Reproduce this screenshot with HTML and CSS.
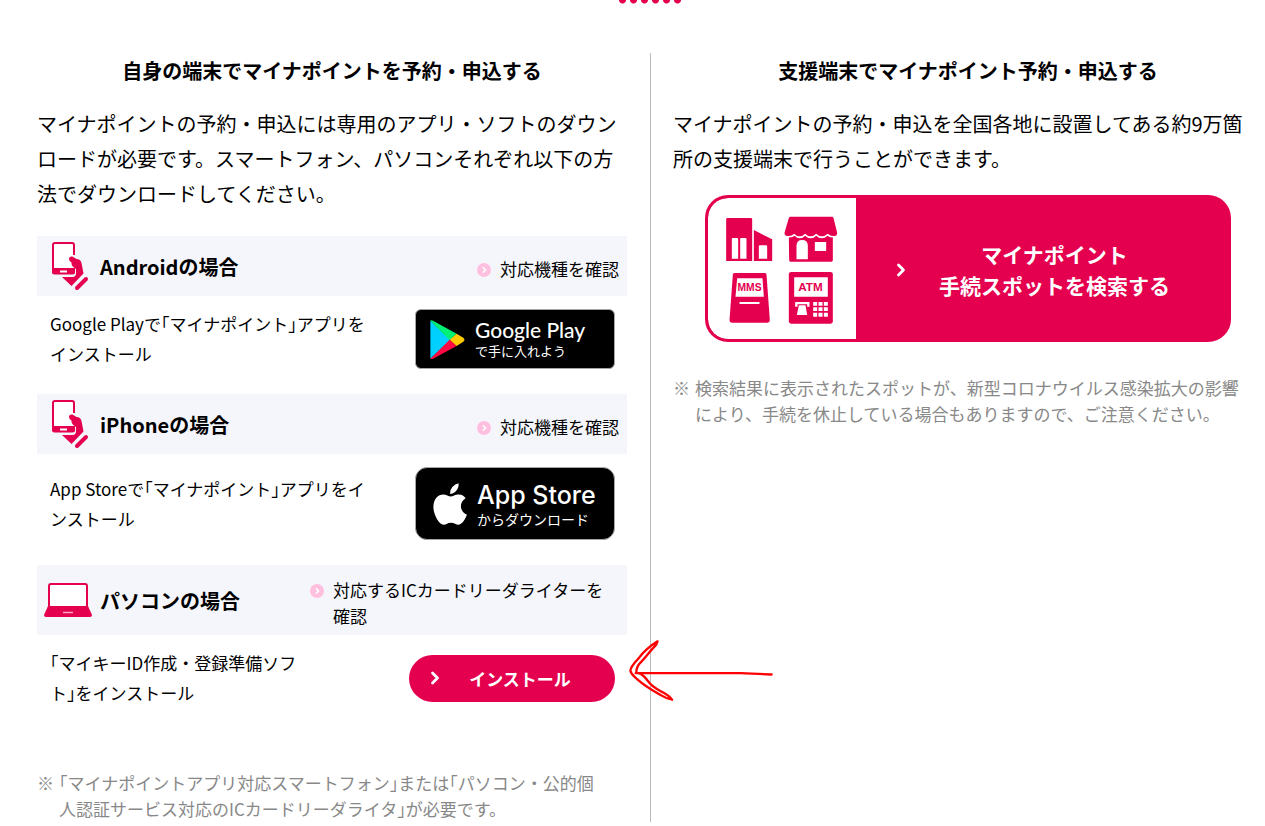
FILE: index.html
```
<!DOCTYPE html>
<html lang="ja">
<head>
    <meta charset="UTF-8">
    <meta name="viewport" content="width=device-width, initial-scale=1.0">
    <title>マイナポイントの予約・申込</title>
    <link rel="stylesheet" href="styles.css">
</head>
<body>

    <!-- Shared icons -->
    <svg class="symbols" aria-hidden="true">
        <symbol id="icon-phone" viewBox="0 0 48 52">
            <path d="M30 15V5q0-2-2-2H11q-2 0-2 2v26q0 2 2 2h17q2 0 2-2v-2" fill="#fff" stroke="#e4004f" stroke-width="2"/>
            <path d="M8 28h23v4q0 2.500-2.500 2.500h-18Q8 34.500 8 32z" fill="#e4004f"/>
            <path d="M16 31.500h7" stroke="#fff" stroke-width="2"/>
            <path d="M25 19q0-3 3.500-2.500l4 2.500q4 0 5 4l2 10.500L27.500 46 18 37h10.500q3.500 0 3.500-4v-4q-5-3-4.500-6.500Q25 21.500 25 19z" fill="#e4004f"/>
            <path d="M42 39 33 48" stroke="#e4004f" stroke-width="4" stroke-linecap="round"/>
        </symbol>
        <symbol id="icon-circle" viewBox="0 0 14 14">
            <circle cx="7" cy="7" r="7" fill="#ffbfdf"/>
            <path d="M5.800 4.400 8.600 7 5.800 9.600" fill="none" stroke="#fff" stroke-width="1.500"/>
        </symbol>
        <symbol id="icon-chevron" viewBox="0 0 10 14">
            <path d="M2.500 2 7.500 7l-5 5" fill="none" stroke="#fff" stroke-width="2.800" stroke-linecap="round" stroke-linejoin="round"/>
        </symbol>
    </svg>

    <main class="page">
        <div class="dots"></div>

        <div class="columns">
            <!-- Own device -->
            <section class="column column-left">
                <h3>自身の端末でマイナポイントを予約・申込する</h3>
                <p class="lead">マイナポイントの予約・申込には専用のアプリ・ソフトのダウンロードが必要です。スマートフォン、パソコンそれぞれ以下の方法でダウンロードしてください。</p>

                <div class="device-head">
                    <svg class="device-icon"><use href="#icon-phone"/></svg>
                    <h4>Androidの場合</h4>
                    <a href="#" class="check-link"><svg><use href="#icon-circle"/></svg><span>対応機種を確認</span></a>
                </div>
                <div class="device-body">
                    <p>Google Playで｢マイナポイント｣アプリをインストール</p>
                    <a href="#" class="badge badge-google">
                        <svg class="play-logo" viewBox="90 268 104 116" aria-hidden="true">
                            <path d="M91 270v113l60-56z" fill="#00d0ff"/>
                            <path d="M91 270q3-3 8 0l70 39-20 19z" fill="#00f076"/>
                            <path d="M91 383q3 3 8 0l70-38-20-19z" fill="#ff0a44"/>
                            <path d="m169 309 20 12q7 6 0 12l-20 12-20-18z" fill="#ffc900"/>
                        </svg>
                        <span class="badge-text"><span class="badge-name">Google Play</span><span class="badge-sub">で手に入れよう</span></span>
                    </a>
                </div>

                <div class="device-head">
                    <svg class="device-icon"><use href="#icon-phone"/></svg>
                    <h4>iPhoneの場合</h4>
                    <a href="#" class="check-link"><svg><use href="#icon-circle"/></svg><span>対応機種を確認</span></a>
                </div>
                <div class="device-body">
                    <p>App Storeで｢マイナポイント｣アプリをインストール</p>
                    <a href="#" class="badge badge-apple">
                        <svg class="apple-logo" viewBox="98 275 100 124" aria-hidden="true">
                            <path d="M173 276q2 12-6 21-8 10-19 10-1-11 7-20 8-9 18-11z" fill="#fff"/>
                            <path d="M150 315c7 0 14-7 24-6 9 0 16 5 20 11-21 13-17 40 4 49-5 13-14 28-24 29-9 0-13-6-23-6s-14 6-22 6c-13 0-30-29-30-52 0-24 14-37 29-37 9 0 16 6 22 6z" fill="#fff"/>
                        </svg>
                        <span class="badge-text"><span class="badge-name">App Store</span><span class="badge-sub">からダウンロード</span></span>
                    </a>
                </div>

                <div class="device-head device-head-pc">
                    <svg class="device-icon" viewBox="0 0 48 52" aria-hidden="true">
                        <rect x="5" y="10" width="38" height="25" rx="2" fill="#fff" stroke="#e4004f" stroke-width="2"/>
                        <path d="M4 32h40l4 9q0 2-2 2H2q-2 0-2-2z" fill="#e4004f"/>
                        <path d="M19 38.500h10" stroke="#f7a8c5" stroke-width="1.500"/>
                    </svg>
                    <h4>パソコンの場合</h4>
                    <a href="#" class="check-link check-link-wide"><svg><use href="#icon-circle"/></svg><span>対応するICカードリーダライターを確認</span></a>
                </div>
                <div class="device-body device-body-pc">
                    <p>｢マイキーID作成・登録準備ソフト｣をインストール</p>
                    <button type="button" class="install"><svg><use href="#icon-chevron"/></svg><span>インストール</span></button>
                </div>

                <p class="note note-left"><span>※</span><span>｢マイナポイントアプリ対応スマートフォン｣または｢パソコン・公的個人認証サービス対応のICカードリーダライタ｣が必要です。</span></p>
            </section>

            <!-- Support terminals -->
            <section class="column column-right">
                <h3>支援端末でマイナポイント予約・申込する</h3>
                <p class="lead">マイナポイントの予約・申込を全国各地に設置してある約9万箇所の支援端末で行うことができます。</p>

                <a href="#" class="search-banner">
                    <svg class="spots" viewBox="27 24 441 423" aria-hidden="true">
                        <g fill="#e4004f">
                            <!-- building -->
                            <path d="M80 88q0-4 4-4h70q4 0 4 4v125H80zM163 120l55 28v65h-55z"/>
                            <path d="M97 147q0-3 3-3h12q4 0 4 3v59H97zM122 147q0-3 3-3h12q4 0 4 3v59h-19zM178 169q0-3 3-3h18q4 0 4 3v37h-25z" fill="#fff"/>
                            <!-- shop -->
                            <path d="M268 84q1-4 5-4h124q4 0 5 4l11 44q1 10-12 10-9 0-16-7-10 8-18 8-9 0-17-8-8 8-17 8t-16-8q-8 8-17 8t-16-8q-7 7-16 7-14 0-13-10z"/>
                            <path d="M268 142q10 1 17-5 8 8 16 8t16-8q8 8 17 8t16-8q9 8 17 8t17-8q7 7 16 5v69q0 4-4 4H273q-4 0-4-4z"/>
                            <path d="M291 208v-41q0-17 17-17t17 17v41zM346 156h34v27h-34z" fill="#fff"/>
                            <!-- multimedia station -->
                            <path d="M100 254q0-5 5-5h91q5 0 5 5l10 137q0 7-7 7H97q-7 0-7-7z"/>
                            <path d="M113 265h76l4 55h-85zM120 336h60v6h-60z" fill="#fff"/>
                            <!-- ATM -->
                            <rect x="268" y="246" width="132" height="155" rx="7"/>
                            <path d="M284 262h101v58H284z" fill="#fff"/>
                            <path d="M287 336h43v14h-7v-7h-29v7h-7zM298 346h20l5 29h-31zM341 336h12v11h-12zM357 336h12v11h-12zM373 336h12v11h-12zM341 352h12v11h-12zM357 352h12v11h-12zM373 352h12v11h-12zM341 368h12v12h-12zM357 368h12v12h-12zM373 368h12v12h-12z" fill="#fff"/>
                            <text x="150" y="304" font-size="31">MMS</text>
                            <text x="333" y="304" font-size="35">ATM</text>
                        </g>
                    </svg>
                    <span class="search-label"><svg><use href="#icon-chevron"/></svg><span>マイナポイント<br>手続スポットを検索する</span></span>
                </a>

                <p class="note"><span>※</span><span>検索結果に表示されたスポットが、新型コロナウイルス感染拡大の影響により、手続を休止している場合もありますので、ご注意ください。</span></p>
            </section>
        </div>

        <!-- Hand-drawn arrow pointing at the install button -->
        <svg class="pointer" viewBox="684 30 438 190" aria-hidden="true">
            <g fill="none" stroke="#f00" stroke-width="7" stroke-linecap="round" stroke-linejoin="round">
                <path d="M706 130h315l95 4"/>
                <path d="M708 128q0-16 10-27c18-19 30-36 50-57l4-10c-24 15-42 31-56 50-15 16-26 27-26 39 3 14 14 18 24 28 22 20 47 33 69 46q16 10 33 13l-8-9c-20-17-50-23-64-46q-15-20-28-25"/>
            </g>
        </svg>
    </main>

</body>
</html>
```
FILE: styles.css
```
* {
    box-sizing: border-box;
}
body {
    margin: 0;
    background-color: #fff;
    color: #000;
    font-family: "Noto Sans CJK JP", sans-serif;
    font-size: 17px;
}
h3, h4, p {
    margin: 0;
}
a {
    color: inherit;
    text-decoration: none;
}
.symbols {
    position: absolute;
    width: 0;
    height: 0;
}
.page {
    position: relative;
    padding: 0 2px 4px 37px;
}
.dots {
    width: 66px;
    height: 4px;
    margin: 0 auto 49px;
    background: radial-gradient(circle at 50% 0, #e4004f 3px, transparent 4px) 0 0 / 11px 4px repeat-x;
}
.columns {
    display: grid;
    grid-template-columns: 1fr 1fr;
}
.column-left {
    padding-right: 23px;
}
.column-right {
    padding-left: 22px;
    border-left: 1px solid #bbb;
}
h3 {
    font-size: 20px;
    font-weight: bold;
    line-height: 36px;
    text-align: center;
}
.lead {
    margin-top: 17px;
    padding-right: 4px;
    font-size: 20px;
    line-height: 35px;
}

/* Device blocks */
.device-head {
    display: flex;
    align-items: center;
    min-height: 60px;
    margin-top: 25px;
    padding: 0 8px 0 7px;
    background-color: #f5f6fb;
}
.device-icon {
    flex: none;
    width: 48px;
    height: 52px;
}
h4 {
    margin-left: 8px;
    padding-top: 2px;
    font-size: 20px;
    font-weight: bold;
    line-height: 30px;
}
.check-link {
    display: flex;
    gap: 9px;
    margin-left: auto;
    padding-top: 6px;
    line-height: 26px;
}
.check-link svg {
    flex: none;
    width: 14px;
    height: 14px;
    margin-top: 7px;
}
.check-link-wide {
    width: 309px;
    padding-right: 6px;
}
.device-head-pc {
    min-height: 70px;
}
.device-body {
    display: flex;
    justify-content: space-between;
    align-items: center;
    padding: 13px 12px 0 13px;
}
.device-body p {
    max-width: 325px;
    line-height: 30px;
}
.device-body-pc p {
    max-width: 255px;
}

/* Store badges */
.badge {
    display: flex;
    align-items: center;
    width: 200px;
    border: 1px solid #a6a6a6;
    background-color: #000;
    color: #fff;
}
.badge-google {
    height: 60px;
    padding-left: 14px;
    border-radius: 6px;
}
.badge-apple {
    height: 73px;
    padding-left: 17px;
    border-radius: 12px;
}
.play-logo {
    width: 35px;
    height: 39px;
}
.apple-logo {
    width: 34px;
    height: 42px;
}
.badge-text {
    display: flex;
    flex-direction: column;
    margin-left: 10px;
}
.badge-name {
    font-family: Lato, sans-serif;
    font-size: 21px;
    font-weight: 500;
    line-height: 24px;
}
.badge-sub {
    font-size: 13px;
    line-height: 18px;
}
.badge-apple .badge-name {
    font-family: Inter, sans-serif;
    font-size: 25px;
    line-height: 30px;
}
.badge-apple .badge-sub {
    font-size: 14px;
}

.install {
    display: flex;
    align-items: center;
    width: 206px;
    height: 47px;
    padding: 0 15px 0 21px;
    border: none;
    border-radius: 24px;
    background-color: #e4004f;
    color: #fff;
    font-family: inherit;
    font-size: 17px;
    font-weight: bold;
    cursor: pointer;
}
.install svg, .search-label svg {
    flex: none;
    width: 10px;
    height: 14px;
}
.install span {
    flex: 1;
}

/* Spot search */
.search-banner {
    display: flex;
    max-width: 526px;
    height: 147px;
    margin: 19px auto 0;
    border: 3px solid #e4004f;
    border-radius: 23px;
    background-color: #e4004f;
    overflow: hidden;
}
.spots {
    flex: none;
    width: 148px;
    height: 141px;
    border-radius: 20px 0 0 20px;
    background-color: #fff;
}
.spots text {
    font-family: "Liberation Sans", sans-serif;
    font-weight: bold;
    text-anchor: middle;
}
.search-label {
    display: flex;
    flex: 1;
    align-items: center;
    padding: 2px 25px 0 40px;
    color: #fff;
    font-size: 21px;
    font-weight: bold;
    line-height: 31px;
    text-align: center;
}
.search-label span {
    flex: 1;
}

.note {
    display: flex;
    gap: 5px;
    margin-top: 33px;
    padding-right: 8px;
    color: #888;
    line-height: 26px;
}
.note-left {
    margin-top: 62px;
    padding-right: 20px;
}

.pointer {
    position: absolute;
    top: 640px;
    left: 628px;
    width: 146px;
    height: 63px;
}
```
